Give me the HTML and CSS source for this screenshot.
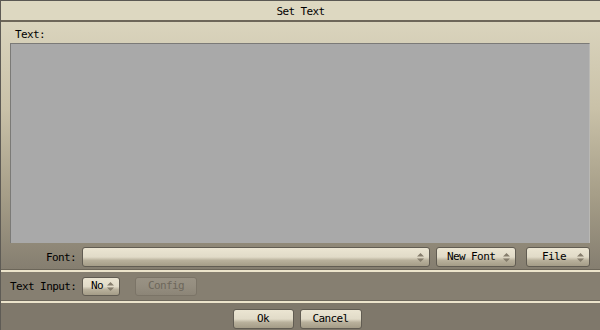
FILE: index.html
```html
<!DOCTYPE html>
<html lang="en">
<head>
    <meta charset="UTF-8">
    <title>Set Text</title>
    <link rel="stylesheet" href="styles.css">
</head>
<body>
    <div class="window">
        <div class="titlebar">Set Text</div>

        <div class="panel">
            <div class="label-top">Text:</div>
            <div class="text-area"></div>
            <div class="row">
                <div class="label">Font:</div>
                <div class="btn choice font-choice">
                    <span></span>
                    <svg class="arrows" width="7" height="9" viewBox="0 0 7 9"><path d="M3.5 0L7 3.5H0Z M3.5 9L7 5.5H0Z"/></svg>
                </div>
                <div class="btn choice new-font">
                    <span>New Font</span>
                    <svg class="arrows" width="7" height="9" viewBox="0 0 7 9"><path d="M3.5 0L7 3.5H0Z M3.5 9L7 5.5H0Z"/></svg>
                </div>
                <div class="btn choice file">
                    <span>File</span>
                    <svg class="arrows" width="7" height="9" viewBox="0 0 7 9"><path d="M3.5 0L7 3.5H0Z M3.5 9L7 5.5H0Z"/></svg>
                </div>
            </div>
        </div>

        <div class="separator"></div>

        <div class="row input-row">
            <div class="label left">Text Input:</div>
            <div class="btn choice no">
                <span>No</span>
                <svg class="arrows" width="7" height="9" viewBox="0 0 7 9"><path d="M3.5 0L7 3.5H0Z M3.5 9L7 5.5H0Z"/></svg>
            </div>
            <div class="btn disabled config">Config</div>
        </div>

        <div class="separator"></div>

        <div class="buttons">
            <div class="btn ok">Ok</div>
            <div class="btn cancel">Cancel</div>
        </div>
    </div>
</body>
</html>
```

FILE: styles.css
```css
body {
    margin: 0;
    font-family: "DejaVu Sans Mono", monospace;
    font-size: 11px;
    letter-spacing: -0.6px;
    color: #000;
    background: #7e776a;
}
.window {
    width: 600px;
    height: 330px;
    box-sizing: border-box;
    border-left: 1px solid #5e5b55;
    display: flex;
    flex-direction: column;
    overflow: hidden;
}
.titlebar {
    height: 19px;
    line-height: 21px;
    text-align: center;
    background: #ddd8c1;
    border-top: 1px solid #5a5853;
    border-bottom: 2px solid #6d6659;
}
.panel {
    height: 247px;
    padding: 0 10px 0 9px;
    background: linear-gradient(#dad4bd 0%, #c9c1a8 35%, #a69e88 70%, #857e70 100%);
    border-bottom: 1px solid #6c6659;
}
.label-top {
    height: 21px;
    line-height: 26px;
    padding-left: 5px;
}
.text-area {
    height: 199px;
    background: #a9a9a9;
    border-top: 1px solid #7b7a77;
    border-left: 1px solid #7b7a77;
    border-right: 1px solid #b9b8b4;
}
.row {
    display: flex;
    align-items: center;
    margin-top: 4px;
    height: 20px;
}
.label {
    width: 66px;
    flex: none;
    white-space: nowrap;
    text-align: right;
    margin-right: 6px;
}
.label.left {
    text-align: left;
}
.separator {
    height: 2px;
    background: #ece4cb;
}
.input-row {
    margin: 0;
    height: 28px;
    padding-left: 9px;
    background: #867f71;
    border-bottom: 1px solid #6f695d;
}
.btn {
    box-sizing: border-box;
    height: 20px;
    border: 1px solid #615c52;
    border-radius: 3px;
    background: linear-gradient(#ebe5d2 0%, #e1dbc8 50%, #b9b19c 68%, #a49c87 100%);
    display: flex;
    align-items: center;
    justify-content: center;
    line-height: 18px;
    white-space: nowrap;
}
.choice {
    justify-content: space-between;
    padding: 0 5px 0 10px;
}
.arrows {
    fill: #857d6c;
}
.font-choice {
    flex: 1;
    margin-right: 6px;
}
.new-font {
    width: 80px;
    margin-right: 10px;
}
.file {
    width: 64px;
    padding-left: 15px;
}
.no {
    width: 38px;
    height: 19px;
    padding-left: 8px;
}
.config {
    width: 62px;
    height: 19px;
    margin-left: 15px;
    color: #6d675b;
    border-color: #7b7467;
    background: linear-gradient(#999284 0%, #948d7f 50%, #8c8577 100%);
}
.buttons {
    flex: 1;
    display: flex;
    justify-content: center;
    align-items: flex-start;
    gap: 6px;
    padding-top: 6px;
    padding-right: 7px;
    background: #7f786b;
}
.ok {
    width: 61px;
}
.cancel {
    width: 62px;
}
```
